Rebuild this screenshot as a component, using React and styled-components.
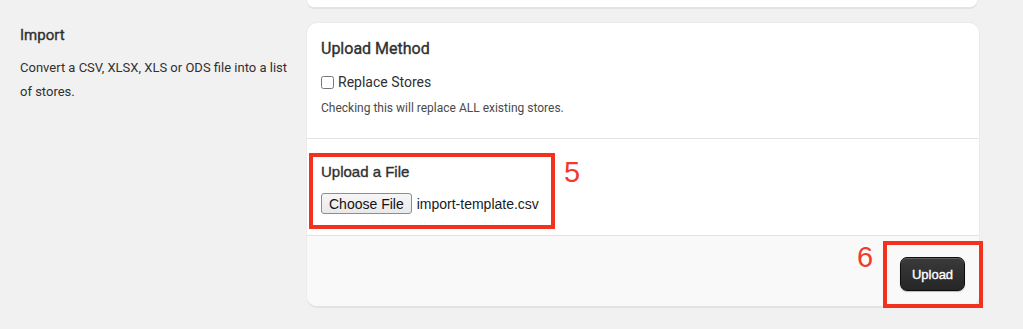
import React from 'react';
import styled, { createGlobalStyle } from 'styled-components';

const GlobalStyle = createGlobalStyle`
  html, body {
    margin: 0;
    padding: 0;
    background: #f1f1f1;
  }
  body {
    font-family: Roboto, "Liberation Sans", Arial, sans-serif;
    color: #303030;
  }
`;

const Page = styled.div`
  display: grid;
  grid-template-columns: 271px 672px;
  align-content: start;
  column-gap: 16px;
  row-gap: 16px;
  padding: 0 44px 0 20px;
  width: 1023px;
  height: 329px;
  box-sizing: border-box;
  overflow: hidden;
`;

const PrevCard = styled.div`
  grid-column: 2;
  height: 7px;
  background: #fff;
  border-radius: 0 0 10px 10px;
  box-shadow: 0 2px 0 0 #e3e3e3, 0 0 0 1px #ececec;
  margin-right: 2px;
`;

const Intro = styled.div`
  grid-column: 1;
  padding-top: 2px;
`;

const IntroTitle = styled.h2`
  margin: 0;
  font-size: 15px;
  font-weight: 400;
  -webkit-text-stroke: 0.35px #303030;
  line-height: 20px;
  color: #303030;
`;

const IntroText = styled.p`
  margin: 11px 0 0;
  font-size: 13px;
  line-height: 24px;
  color: #303030;
`;

const Card = styled.div`
  grid-column: 2;
  position: relative;
  background: #fff;
  border-radius: 10px;
  box-shadow: 0 2px 0 0 #e3e3e3, 0 0 0 1px #ebebeb;
`;

const Section = styled.div`
  padding: ${p => p.$pad};
  border-bottom: ${p => (p.$divider ? '1px solid #e3e3e3' : 'none')};
`;

const SectionTitle = styled.h3`
  margin: 0;
  font-family: ${p => (p.$arial ? '"Liberation Sans", Arial, sans-serif' : 'Roboto, sans-serif')};
  font-size: ${p => (p.$arial ? '15px' : '16px')};
  font-weight: 400;
  -webkit-text-stroke: 0.35px #303030;
  line-height: 20px;
  color: #303030;
`;

const CheckRow = styled.label`
  display: flex;
  align-items: center;
  margin-top: 13px;
  font-size: 14px;
  line-height: 20px;
  color: #303030;

  input {
    margin: 0 4px 0 0;
    width: 13px;
    height: 13px;
  }
`;

const Help = styled.p`
  margin: 6px 0 0;
  font-size: 12px;
  line-height: 20px;
  color: #4a4a4a;
`;

const FileRow = styled.div`
  display: flex;
  align-items: center;
  gap: 5px;
  margin-top: 11px;
  font-family: "Liberation Sans", Arial, sans-serif;
  font-size: 14px;
  color: #1a1a1a;
`;

const ChooseButton = styled.button`
  height: 21px;
  padding: 0 7px;
  font-family: "Liberation Sans", Arial, sans-serif;
  font-size: 14px;
  color: #111;
  background: linear-gradient(#f6f6f6, #e9e9e9);
  border: 1px solid #8d8d8d;
  border-radius: 3px;
`;

const Footer = styled.div`
  display: flex;
  justify-content: flex-end;
  padding: 21px 14px 15px;
  background: #f9f9f9;
  border-radius: 0 0 10px 10px;
`;

const PrimaryButton = styled.button`
  width: 65px;
  height: 34px;
  font-family: "Liberation Sans", Arial, sans-serif;
  font-size: 13px;
  font-weight: 400;
  -webkit-text-stroke: 0.35px #fff;
  color: #fff;
  background: linear-gradient(#3a3a3a, #262626);
  border: 1px solid #0d0d0d;
  border-radius: 7px;
  box-shadow: inset 0 1px 0 rgba(255, 255, 255, 0.2), 0 1px 1px rgba(0, 0, 0, 0.25);
`;

const Marker = styled.div`
  position: absolute;
  left: ${p => p.$x}px;
  top: ${p => p.$y}px;
  width: ${p => p.$w}px;
  height: ${p => p.$h}px;
  border: 4px solid #f2311f;
  box-sizing: border-box;
  pointer-events: none;
`;

const Step = styled.span`
  position: absolute;
  left: ${p => p.$x}px;
  top: ${p => p.$y}px;
  font-family: "Liberation Sans", Arial, sans-serif;
  font-size: 29px;
  line-height: 1;
  color: #f2392b;
`;

export default function App() {
  return (
    <>
      <GlobalStyle />
      <Page>
        <div />
        <PrevCard />
        <Intro>
          <IntroTitle>Import</IntroTitle>
          <IntroText>Convert a CSV, XLSX, XLS or ODS file into a list of stores.</IntroText>
        </Intro>
        <Card>
          <Section $pad="16px 14px 20px" $divider>
            <SectionTitle>Upload Method</SectionTitle>
            <CheckRow>
              <input type="checkbox" />
              Replace Stores
            </CheckRow>
            <Help>Checking this will replace ALL existing stores.</Help>
          </Section>
          <Section $pad="23px 14px 21px" $divider>
            <SectionTitle $arial>Upload a File</SectionTitle>
            <FileRow>
              <ChooseButton type="button">Choose File</ChooseButton>
              <span>import-template.csv</span>
            </FileRow>
          </Section>
          <Footer>
            <PrimaryButton type="button">Upload</PrimaryButton>
          </Footer>
          <Marker $x={2} $y={130} $w={246} $h={76} />
          <Step $x={257} $y={135}>5</Step>
          <Marker $x={576} $y={218} $w={100} $h={67} />
          <Step $x={550} $y={220}>6</Step>
        </Card>
      </Page>
    </>
  );
}
